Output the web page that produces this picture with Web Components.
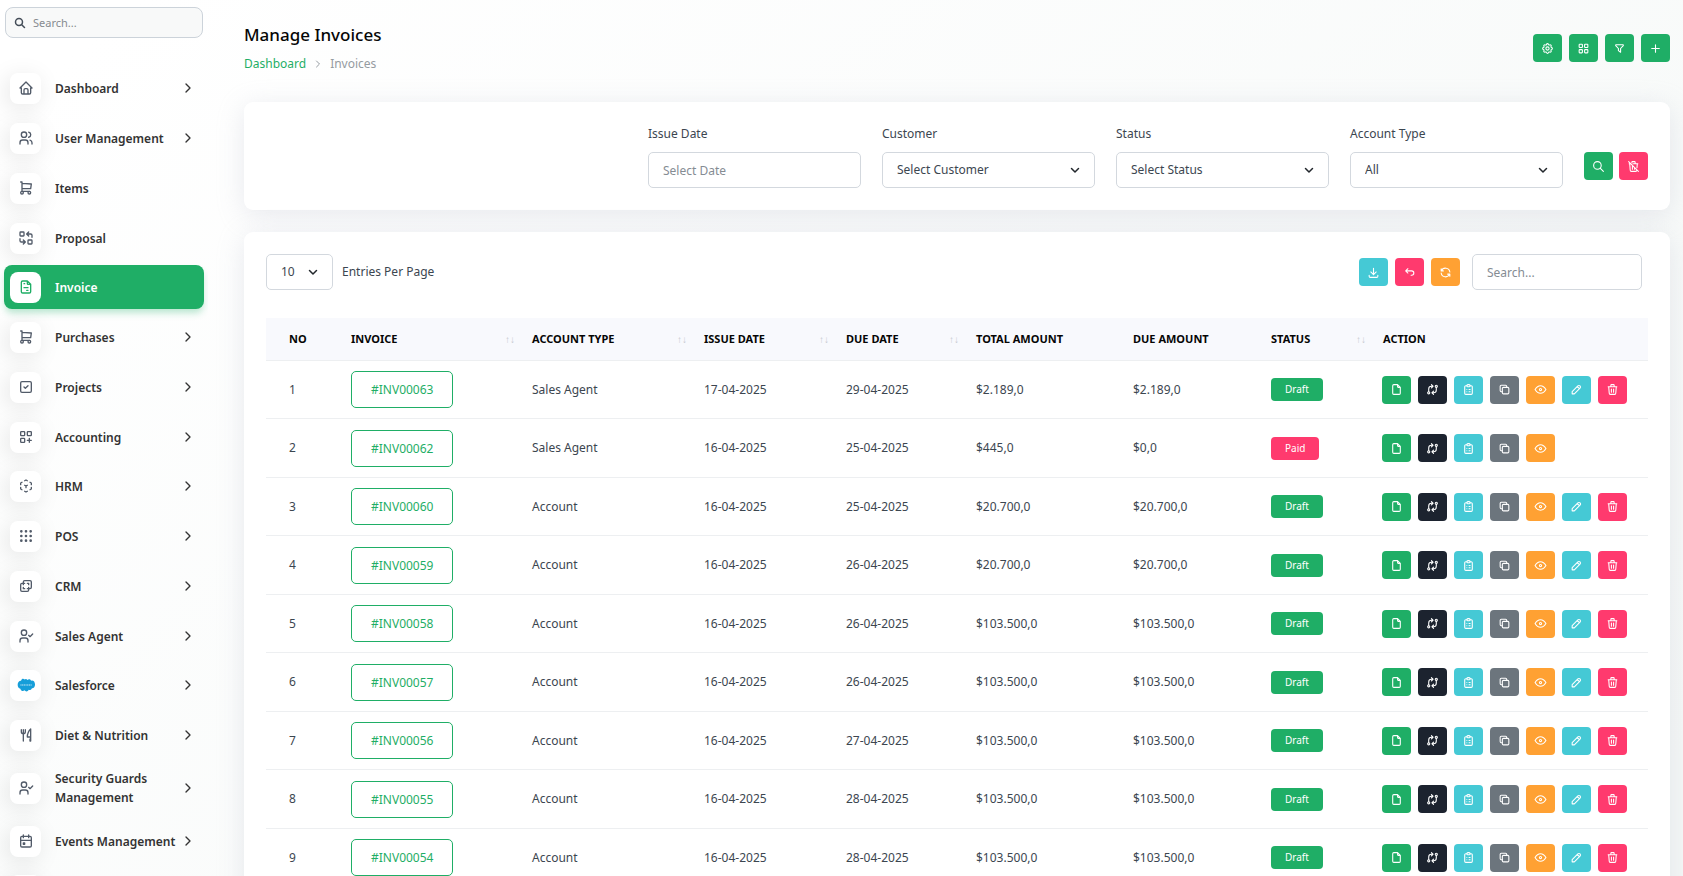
<!DOCTYPE html>
<html lang="en">
<head>
<meta charset="utf-8">
<meta name="viewport" content="width=device-width, initial-scale=1">
<title>Manage Invoices</title>
<style>
  body { margin: 0; font: 12px/18px "Noto Sans", "Open Sans", sans-serif; color: #3c4650; }
</style>
</head>
<body>
<invoice-app></invoice-app>
<script>
const ICONS = {
  home: '<path d="M5 12H3l9-9 9 9h-2M5 12v7a2 2 0 0 0 2 2h10a2 2 0 0 0 2-2v-7M9 21v-6a2 2 0 0 1 2-2h2a2 2 0 0 1 2 2v6"/>',
  users: '<circle cx="9" cy="7" r="4"/><path d="M3 21v-2a4 4 0 0 1 4-4h4a4 4 0 0 1 4 4v2M16 3.1a4 4 0 0 1 0 7.8M21 21v-2a4 4 0 0 0-3-3.9"/>',
  cart: '<circle cx="6" cy="19" r="2"/><circle cx="17" cy="19" r="2"/><path d="M17 17H6V3H4M6 5l14 1-1 7H6"/>',
  replace: '<rect x="3" y="3" width="6" height="6" rx="1"/><rect x="15" y="15" width="6" height="6" rx="1"/><path d="M21 11V8a2 2 0 0 0-2-2h-6l3 3m0-6-3 3M3 13v3a2 2 0 0 0 2 2h6l-3-3m0 6 3-3"/>',
  invoice: '<path d="M14 3v4a1 1 0 0 0 1 1h4M17 21H7a2 2 0 0 1-2-2V5a2 2 0 0 1 2-2h7l5 5v11a2 2 0 0 1-2 2zM9 7h1M9 13h6M13 17h2"/>',
  check: '<rect x="4" y="4" width="16" height="16" rx="2"/><path d="m9 12 2 2 4-4"/>',
  gridadd: '<rect x="4" y="4" width="6" height="6" rx="1"/><rect x="14" y="4" width="6" height="6" rx="1"/><rect x="4" y="14" width="6" height="6" rx="1"/><path d="M14 17h6m-3-3v6"/>',
  cube: '<path d="m6 17.6-2-1.1V14M4 10V7.5l2-1.100M10 4.100 12 3l2 1.100M18 6.400l2 1.100V10M20 14v2.500l-2 1.100M14 19.900 12 21l-2-1.100M12 12l2-1.100M12 12v2.500M12 12l-2-1.100"/>',
  dots: '<g fill="currentColor"><circle cx="5" cy="5" r="1"/><circle cx="12" cy="5" r="1"/><circle cx="19" cy="5" r="1"/><circle cx="5" cy="12" r="1"/><circle cx="12" cy="12" r="1"/><circle cx="19" cy="12" r="1"/><circle cx="5" cy="19" r="1"/><circle cx="12" cy="19" r="1"/><circle cx="19" cy="19" r="1"/></g>',
  layers: '<path d="M16 16v2a2 2 0 0 1-2 2H6a2 2 0 0 1-2-2v-8a2 2 0 0 1 2-2h2V6a2 2 0 0 1 2-2h8a2 2 0 0 1 2 2v8a2 2 0 0 1-2 2h-2M10 8H8v2M8 14v2h2M14 8h2v2M16 14v2h-2"/>',
  usercheck: '<circle cx="9" cy="7" r="4"/><path d="M3 21v-2a4 4 0 0 1 4-4h4a4 4 0 0 1 4 4v2M16 11l2 2 4-4"/>',
  cloud: '<g transform="translate(2 -1) scale(.84 1.08)"><g stroke="none"><path fill="#169ed9" d="M9.500 4.500C7.500 2.600 4 3 3 6.200-.5 6-3 8.500-3 11.800c0 3 2 5.300 4.800 5.400C3 20.300 6.500 21.400 9.200 19.500c2 2.300 6 2.200 7.500-.8 2.500.9 4.900-.2 5.800-2.200 3 .4 5.500-2 5.500-5.200 0-3.800-3.500-6.400-7-5.200-1.500-2.300-4.600-2.700-6.500-.9-1.400-1.700-3.500-1.900-5-.7z"/></g><path stroke="#fff" stroke-opacity=".55" stroke-width="2" stroke-dasharray="2 1" stroke-linecap="butt" d="M2 12h20"/></g>',
  kitchen: '<path d="M19 3v12h-5c0-3.700.2-7.400 5-12zm0 12v6h-1v-3M8 4v17M5 4v3a3 3 0 1 0 6 0V4"/>',
  calendar: '<rect x="4" y="5" width="16" height="16" rx="2"/><path d="M16 3v4M8 3v4M4 11h16M8 15h2v2H8z"/>',
  search: '<circle cx="10" cy="10" r="7"/><path d="m21 21-6-6"/>',
  right: '<path d="m9 6 6 6-6 6"/>',
  down: '<path d="m5 9 7 7 7-7"/>',
  settings: '<path d="M10.300 4.300c.4-1.700 2.900-1.700 3.400 0a1.700 1.700 0 0 0 2.500 1.100c1.600-.9 3.300.8 2.400 2.400a1.700 1.700 0 0 0 1.100 2.500c1.700.4 1.700 2.900 0 3.400a1.700 1.700 0 0 0-1.100 2.500c.9 1.600-.8 3.300-2.400 2.400a1.700 1.700 0 0 0-2.500 1.100c-.4 1.700-2.900 1.700-3.400 0a1.700 1.700 0 0 0-2.500-1.100c-1.600.9-3.300-.8-2.400-2.400a1.700 1.700 0 0 0-1.100-2.500c-1.700-.4-1.700-2.900 0-3.400a1.700 1.700 0 0 0 1.100-2.500c-.9-1.600.8-3.300 2.400-2.400 1 .6 2.300.1 2.500-1.100z"/><circle cx="12" cy="12" r="3"/>',
  grid: '<rect x="4" y="4" width="6" height="6" rx="1"/><rect x="14" y="4" width="6" height="6" rx="1"/><rect x="4" y="14" width="6" height="6" rx="1"/><rect x="14" y="14" width="6" height="6" rx="1"/>',
  filter: '<path d="M5.500 5h13a1 1 0 0 1 .5 1.500L14 12v7l-4-3v-4L5 6.500A1 1 0 0 1 5.500 5"/>',
  plus: '<path d="M12 5v14M5 12h14"/>',
  trashoff: '<path d="m3 3 18 18M4 7h3m4 0h9M10 11v6M14 14v3M5 7l1 12a2 2 0 0 0 2 2h8a2 2 0 0 0 2-2v-1M18.400 14.400 19 7M9 5V4a1 1 0 0 1 1-1h4a1 1 0 0 1 1 1v3"/>',
  download: '<path d="M4 17v2a2 2 0 0 0 2 2h12a2 2 0 0 0 2-2v-2M7 11l5 5 5-5M12 4v12"/>',
  back: '<path d="M9 13 5 9l4-4M5 9h11a4 4 0 0 1 0 8h-1"/>',
  refresh: '<path d="M20 11A8.100 8.100 0 0 0 4.500 9M4 5v4h4M4 13a8.100 8.100 0 0 0 15.500 2m.5 4v-4h-4"/>',
  file: '<path d="M14 3v4a1 1 0 0 0 1 1h4M17 21H7a2 2 0 0 1-2-2V5a2 2 0 0 1 2-2h7l5 5v11a2 2 0 0 1-2 2z"/>',
  exchange: '<circle cx="5" cy="18" r="2"/><circle cx="19" cy="6" r="2"/><path d="M19 8v5a5 5 0 0 1-5 5h-3l3-3m0 6-3-3M5 16v-5a5 5 0 0 1 5-5h3l-3-3m0 6 3-3"/>',
  clipboard: '<path d="M9 5H7a2 2 0 0 0-2 2v12a2 2 0 0 0 2 2h10a2 2 0 0 0 2-2V7a2 2 0 0 0-2-2h-2"/><rect x="9" y="3" width="6" height="4" rx="2"/><path d="M9 12h0M13 12h2M9 16h0M13 16h2"/>',
  copy: '<rect x="8" y="8" width="12" height="12" rx="2"/><path d="M16 8V6a2 2 0 0 0-2-2H6a2 2 0 0 0-2 2v8a2 2 0 0 0 2 2h2"/>',
  eye: '<circle cx="12" cy="12" r="2"/><path d="M22 12c-2.700 4.700-6 7-10 7s-7.300-2.300-10-7c2.700-4.700 6-7 10-7s7.300 2.300 10 7"/>',
  pencil: '<path d="M4 20h4L18.500 9.500a2.800 2.800 0 0 0-4-4L4 16v4M13.500 6.500l4 4"/>',
  trash: '<path d="M4 7h16M10 11v6M14 11v6M5 7l1 12a2 2 0 0 0 2 2h8a2 2 0 0 0 2-2l1-12M9 7V4a1 1 0 0 1 1-1h4a1 1 0 0 1 1 1v3"/>'
};

const define = (name, render) => customElements.define(name, class extends HTMLElement {
  connectedCallback() {
    if (this.shadowRoot) return;
    this.attachShadow({ mode: 'open' }).innerHTML = render(this);
  }
});

/* A stroked 24-unit icon; --icon sets its size, --stroke its weight. */
define('ui-icon', el => `
  <style>
    :host { display: inline-flex; flex: none; }
    svg { width: var(--icon, 16px); height: var(--icon, 16px); fill: none; stroke: currentColor;
      stroke-width: var(--stroke, 2); stroke-linecap: round; stroke-linejoin: round; overflow: visible; }
  </style>
  <svg viewBox="0 0 24 24" aria-hidden="true">${ICONS[el.getAttribute('name')] || ''}</svg>`);

define('icon-button', el => `
  <style>
    :host { display: inline-flex; --icon: 13px; }
    button { display: grid; place-items: center; width: 29px; height: 28px; padding: 0; border: 0;
      border-radius: 4px; color: #fff; background: var(--tone, #1fae66); cursor: pointer; }
    :host([tone="dark"]) { --tone: #1c232f; }
    :host([tone="cyan"]) { --tone: #45c9d5; }
    :host([tone="gray"]) { --tone: #6c757d; }
    :host([tone="orange"]) { --tone: #ffa133; }
    :host([tone="red"]) { --tone: #ff3a6e; }
  </style>
  <button type="button" aria-label="${el.getAttribute('label')}"><ui-icon name="${el.getAttribute('icon')}"></ui-icon></button>`);

define('nav-item', el => `
  <style>
    :host { display: block; }
    a { display: flex; align-items: center; gap: 14px; box-sizing: border-box; min-height: 44px; padding: 6px 8px 6px 6px;
      border-radius: 8px; color: #333; font-size: 12px; font-weight: 600; line-height: 19px; text-decoration: none; }
    .tile { display: grid; place-items: center; flex: none; width: 31px; height: 31px; border-radius: 8px; --icon: 16px;
      background: #fff; color: #525b69; box-shadow: -3px 4px 23px rgba(0, 0, 0, .1); }
    .label { flex: 1; min-width: 0; margin-right: -14px; }
    .arrow { --icon: 16px; color: #333; }
    :host([active]) a { color: #fff; background: #1fae66; box-shadow: 0 5px 7px -1px rgba(31, 174, 102, .3); }
    :host([active]) .tile { color: #1fae66; box-shadow: none; }
  </style>
  <a href="#"><span class="tile"><ui-icon name="${el.getAttribute('icon')}"></ui-icon></span>
    <span class="label"><slot></slot></span>
    ${el.hasAttribute('more') ? '<ui-icon class="arrow" name="right"></ui-icon>' : ''}</a>`);

const NAV = [
  ['home', 'Dashboard', 1], ['users', 'User Management', 1], ['cart', 'Items'], ['replace', 'Proposal'],
  ['invoice', 'Invoice', 0, 1], ['cart', 'Purchases', 1], ['check', 'Projects', 1], ['gridadd', 'Accounting', 1],
  ['cube', 'HRM', 1], ['dots', 'POS', 1], ['layers', 'CRM', 1], ['usercheck', 'Sales Agent', 1],
  ['cloud', 'Salesforce', 1], ['kitchen', 'Diet &amp; Nutrition', 1], ['usercheck', 'Security Guards Management', 1],
  ['calendar', 'Events Management', 1], ['', '']
];

define('side-nav', () => `
  <style>
    :host { display: block; box-sizing: border-box; padding: 7px 4px; overflow: auto; scrollbar-width: none; }
    .search { display: flex; align-items: center; gap: 7px; height: 29px; margin: 0 1px 28px; padding: 0 8px;
      border: 1px solid #ccd3da; border-radius: 8px; background: #f8f9f9; color: #444d58; --icon: 12px; --stroke: 3; }
    input { flex: 1; min-width: 0; padding: 0; border: 0; outline: 0; background: none; font: inherit; font-size: 11px; color: #333; }
    input::placeholder { color: #868b90; opacity: 1; }
    nav { display: flex; flex-direction: column; }
    nav-item { margin-bottom: 6px; }
    nav-item:nth-child(4n) { margin-bottom: 5px; }
  </style>
  <label class="search"><ui-icon name="search"></ui-icon><input type="text" placeholder="Search..." aria-label="Search menu"></label>
  <nav>${NAV.map(([i, t, more, on]) => `<nav-item icon="${i}"${more ? ' more' : ''}${on ? ' active' : ''}>${t}</nav-item>`).join('')}</nav>`);

define('page-header', () => `
  <style>
    :host { display: flex; justify-content: space-between; align-items: center; }
    h1 { margin: 0 0 8px; font-size: 17px; line-height: 24px; font-weight: 500; color: #060606; }
    .crumbs { display: flex; align-items: center; gap: 6px; line-height: 18px; color: #959ba1; --icon: 12px; }
    a { color: #1fae66; text-decoration: none; }
    .actions { display: flex; gap: 7px; }
  </style>
  <div><h1>Manage Invoices</h1>
    <nav class="crumbs" aria-label="Breadcrumb"><a href="#">Dashboard</a><ui-icon name="right"></ui-icon><span>Invoices</span></nav></div>
  <div class="actions">
    <icon-button icon="settings" label="Settings"></icon-button>
    <icon-button icon="grid" label="Grid view"></icon-button>
    <icon-button icon="filter" label="Filter"></icon-button>
    <icon-button icon="plus" label="Create"></icon-button>
  </div>`);

define('panel-card', () => `
  <style>
    :host { display: block; padding: 22px; border-radius: 9px; background: #fff; box-shadow: 0 5px 27px rgba(182, 186, 203, .3); }
  </style><slot></slot>`);

/* A labelled text box, or a drop-down when a value is given. */
define('form-field', el => {
  const value = el.getAttribute('value'), label = el.getAttribute('label');
  return `
  <style>
    :host { display: flex; flex-direction: column; gap: 8px; min-width: 0; }
    :host([inline]) { flex-direction: row-reverse; align-items: center; gap: 9px; }
    label { line-height: 20px; }
    .box { display: grid; align-items: center; }
    .box > * { grid-area: 1 / 1; }
    ui-icon { justify-self: end; margin-right: 14px; pointer-events: none; color: #22272c; --icon: 12px; --stroke: 3; }
    input, select { box-sizing: border-box; width: 100%; height: 36px; padding: 0 14px; border: 1px solid #d3d8de; border-radius: 5px;
      background: #fff; color: #3c4650; font: inherit; appearance: none; outline: 0; }
    :host([inline]) select { width: 67px; }
    input::placeholder { color: #858c93; opacity: 1; }
  </style>
  ${label ? `<label for="f">${label}</label>` : ''}
  <div class="box">${value
    ? `<select id="f"><option>${value}</option></select><ui-icon name="down"></ui-icon>`
    : `<input id="f" type="text" placeholder="${el.getAttribute('hint')}"${label ? '' : ' aria-label="Search"'}>`}</div>`;
});

define('invoice-filters', () => `
  <style>
    :host { display: grid; grid-template-columns: minmax(0, 361fr) repeat(4, minmax(0, 213fr)) auto; gap: 21px; }
    .first { grid-column: 2; }
    .go { display: flex; gap: 6px; padding-top: 28px; }
  </style>
  <form-field class="first" label="Issue Date" hint="Select Date"></form-field>
  <form-field label="Customer" value="Select Customer"></form-field>
  <form-field label="Status" value="Select Status"></form-field>
  <form-field label="Account Type" value="All"></form-field>
  <div class="go"><icon-button icon="search" label="Apply"></icon-button><icon-button tone="red" icon="trashoff" label="Reset"></icon-button></div>`);

define('table-toolbar', () => `
  <style>
    :host { display: flex; align-items: center; justify-content: space-between; margin-bottom: 28px; }
    .tools { display: flex; align-items: center; gap: 7px; padding-right: 6px; }
    .search { width: 170px; margin-left: 5px; }
  </style>
  <form-field inline label="Entries Per Page" value="10"></form-field>
  <div class="tools">
    <icon-button tone="cyan" icon="download" label="Export"></icon-button>
    <icon-button tone="red" icon="back" label="Reset"></icon-button>
    <icon-button tone="orange" icon="refresh" label="Reload"></icon-button>
    <form-field class="search" hint="Search..."></form-field>
  </div>`);

define('status-badge', () => `
  <style>
    :host { display: inline-block; padding: 0 14px; border-radius: 4px; background: #1fae66; color: #fff; font-size: 10px; line-height: 23px; vertical-align: middle; }
    :host([tone="red"]) { background: #ff3a6e; }
  </style><slot></slot>`);

const COLUMNS = [['No', 73], ['Invoice', 181, 1], ['Account Type', 172, 1], ['Issue Date', 142, 1], ['Due Date', 130, 1],
  ['Total Amount', 157], ['Due Amount', 138], ['Status', 112, 1], ['Action', 277]];
const ROWS = [
  ['63', 'Sales Agent', '17-04-2025', '29-04-2025', '$2.189,0', '$2.189,0'],
  ['62', 'Sales Agent', '16-04-2025', '25-04-2025', '$445,0', '$0,0', 'Paid'],
  ['60', 'Account', '16-04-2025', '25-04-2025', '$20.700,0', '$20.700,0'],
  ['59', 'Account', '16-04-2025', '26-04-2025', '$20.700,0', '$20.700,0'],
  ['58', 'Account', '16-04-2025', '26-04-2025', '$103.500,0', '$103.500,0'],
  ['57', 'Account', '16-04-2025', '26-04-2025', '$103.500,0', '$103.500,0'],
  ['56', 'Account', '16-04-2025', '27-04-2025', '$103.500,0', '$103.500,0'],
  ['55', 'Account', '16-04-2025', '28-04-2025', '$103.500,0', '$103.500,0'],
  ['54', 'Account', '16-04-2025', '28-04-2025', '$103.500,0', '$103.500,0']
];
const ACTIONS = [['', 'file', 'Open'], ['dark', 'exchange', 'Convert'], ['cyan', 'clipboard', 'Copy link'], ['gray', 'copy', 'Duplicate'],
  ['orange', 'eye', 'View'], ['cyan', 'pencil', 'Edit'], ['red', 'trash', 'Delete']];

define('invoice-table', () => `
  <style>
    :host { display: block; }
    table { width: 100%; table-layout: fixed; border-collapse: separate; border-spacing: 0; }
    th, td { padding: 0 5px 0 12px; border-bottom: 1px solid #edeff1; text-align: left; white-space: nowrap; }
    th { height: 42px; background: #f8f9fd; color: #060606; font-size: 11px; font-weight: 700; text-transform: uppercase; }
    th:first-child, td:first-child { padding-left: 23px; }
    td:last-child { padding-left: 11px; }
    th div { display: flex; justify-content: space-between; align-items: center; }
    .sort { color: #c4c8cd; font-size: 10px; line-height: 14px; font-weight: 400; }
    td { height: 57px; }
    tr:nth-child(even) td { height: 58px; }
    .number { display: inline-block; padding: 0 19px; border: 1px solid #1fae66; border-radius: 5px; color: #1fae66; line-height: 35px; text-decoration: none; vertical-align: middle; }
    .actions { display: flex; gap: 7px; }
  </style>
  <table>
    <colgroup>${COLUMNS.map(c => `<col style="width:${c[1]}px">`).join('')}</colgroup>
    <thead><tr>${COLUMNS.map(c => `<th scope="col"><div>${c[0]}${c[2] ? '<span class="sort">↑↓</span>' : ''}</div></th>`).join('')}</tr></thead>
    <tbody>${ROWS.map((r, i) => `<tr><td>${i + 1}</td><td><a class="number" href="#">#INV000${r[0]}</a></td>
      ${r.slice(1, 6).map(v => `<td>${v}</td>`).join('')}
      <td><status-badge${r[6] ? ' tone="red"' : ''}>${r[6] || 'Draft'}</status-badge></td>
      <td><div class="actions">${ACTIONS.slice(0, r[6] ? 5 : 7).map(a => `<icon-button tone="${a[0]}" icon="${a[1]}" label="${a[2]}"></icon-button>`).join('')}</div></td></tr>`).join('')}</tbody>
  </table>`);

define('invoice-app', () => `
  <style>
    :host { display: grid; grid-template-columns: 208px minmax(0, 1fr); height: 100vh; background: linear-gradient(140deg, #fff 5%, #f5f8f7 95%); }
    main { display: flex; flex-direction: column; gap: 22px; padding: 23px 13px 22px 36px; overflow: auto; scrollbar-width: none; }
    page-header { margin-bottom: 7px; }
  </style>
  <side-nav></side-nav>
  <main>
    <page-header></page-header>
    <panel-card><invoice-filters></invoice-filters></panel-card>
    <panel-card><table-toolbar></table-toolbar><invoice-table></invoice-table></panel-card>
  </main>`);
</script>
</body>
</html>
